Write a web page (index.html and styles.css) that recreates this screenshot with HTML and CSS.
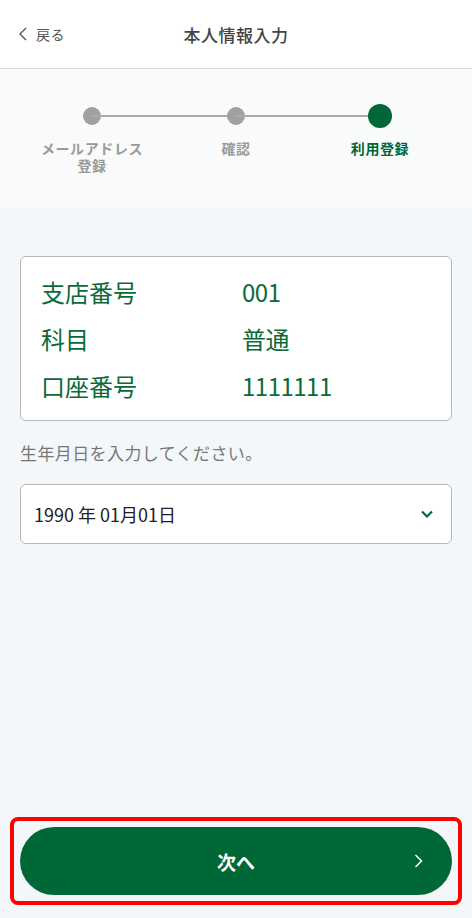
FILE: index.html
```html
<!DOCTYPE html>
<html lang="ja">
  <head>
    <meta charset="UTF-8" />
    <meta name="viewport" content="width=device-width, initial-scale=1.0" />
    <title>本人情報入力</title>
    <link rel="stylesheet" href="styles.css">
  </head>
  <body>
    <div class="page">
      <!-- header -->
      <header class="header">
        <a class="back" href="#">
          <svg class="back-icon" width="10" height="14" viewBox="0 0 10 14">
            <path d="M8 1 L2 7 L8 13" fill="none" stroke="#555" stroke-width="1.4" />
          </svg>
          <span>戻る</span>
        </a>
        <h1 class="title">本人情報入力</h1>
      </header>

      <!-- stepper -->
      <div class="stepper">
        <div class="step done">
          <div class="dot-row"><span class="dot"></span></div>
          <p>メールアドレス<br>登録</p>
        </div>
        <div class="step done">
          <div class="dot-row"><span class="dot"></span></div>
          <p>確認</p>
        </div>
        <div class="step current">
          <div class="dot-row"><span class="dot"></span></div>
          <p>利用登録</p>
        </div>
      </div>

      <main class="content">
        <div class="account-card">
          <div class="row"><span>支店番号</span><span>001</span></div>
          <div class="row"><span>科目</span><span>普通</span></div>
          <div class="row"><span>口座番号</span><span>1111111</span></div>
        </div>

        <p class="hint">生年月日を入力してください。</p>

        <div class="select">
          <span>1990 年 01月01日</span>
          <svg width="14" height="10" viewBox="0 0 14 10">
            <path d="M2 2.5 L7 7.5 L12 2.5" fill="none" stroke="#006837" stroke-width="2.2" />
          </svg>
        </div>
      </main>

      <footer class="footer">
        <div class="highlight">
          <button class="next-btn">
            <span>次へ</span>
            <svg class="next-icon" width="9" height="14" viewBox="0 0 9 14">
              <path d="M1.5 1 L7.5 7 L1.5 13" fill="none" stroke="#fff" stroke-width="1.5" />
            </svg>
          </button>
        </div>
      </footer>
    </div>
  </body>
</html>
```

FILE: styles.css
```css
body {
  margin: 0;
  padding: 0;
  font-family: "Noto Sans CJK JP", "Noto Sans", sans-serif;
  background: #f4f7fa;
}

.page {
  min-height: 100vh;
  display: flex;
  flex-direction: column;
}

/* header */
.header {
  height: 68px;
  background: #fff;
  border-bottom: 1px solid #dcdcdc;
  display: flex;
  align-items: center;
  justify-content: center;
  position: relative;
}

.back {
  position: absolute;
  left: 18px;
  top: 24px;
  display: flex;
  align-items: center;
  gap: 8px;
  color: #555;
  font-size: 14px;
  letter-spacing: 0.5px;
  text-decoration: none;
}

.title {
  margin: 0;
  font-size: 17px;
  font-weight: 500;
  letter-spacing: 0.5px;
  color: #444;
}

/* stepper */
.stepper {
  background: #f9fafa;
  display: grid;
  grid-template-columns: repeat(3, 1fr);
  padding: 35px 20px 33px;
}

.step {
  position: relative;
  text-align: center;
}

.dot-row {
  height: 24px;
  display: flex;
  align-items: center;
  justify-content: center;
}

.step + .step::before {
  content: "";
  position: absolute;
  top: 11px;
  left: -50%;
  width: 100%;
  height: 2px;
  background: #a9a9a9;
}

.dot {
  position: relative;
  width: 18px;
  height: 18px;
  border-radius: 50%;
  background: #a0a0a0;
}

.step.current .dot {
  width: 24px;
  height: 24px;
  background: #006837;
}

.step p {
  margin: 12px 0 0;
  font-size: 14px;
  line-height: 17px;
  letter-spacing: 0.6px;
  font-weight: bold;
  color: #9a9a9a;
}

.step.current p {
  color: #006837;
}

/* content */
.content {
  flex: 1;
  padding: 49px 20px 0;
}

.account-card {
  background: #fff;
  border: 1px solid #b8b8b8;
  border-radius: 6px;
  padding: 11px 20px;
}

.row {
  display: grid;
  grid-template-columns: 201px 1fr;
  font-size: 24px;
  line-height: 47px;
  color: #0a6b3a;
}

.row span:last-child {
  letter-spacing: -0.5px;
}

.hint {
  margin: 19px 0 0;
  font-size: 17px;
  line-height: 26px;
  letter-spacing: 0.4px;
  color: #777;
}

.select {
  margin-top: 18px;
  height: 58px;
  background: #fff;
  border: 1px solid #b8b8b8;
  border-radius: 6px;
  display: flex;
  align-items: center;
  justify-content: space-between;
  padding: 0 17px 0 13px;
  font-size: 18px;
  color: #222;
}

/* footer */
.footer {
  padding: 0 10px 13px;
}

.highlight {
  border: 4px solid #ff0000;
  border-radius: 8px;
  padding: 6px;
}

.next-btn {
  position: relative;
  width: 100%;
  height: 68px;
  border: none;
  border-radius: 34px;
  background: #006837;
  color: #fff;
  font-family: inherit;
  font-size: 19px;
  font-weight: bold;
  cursor: pointer;
}

.next-icon {
  position: absolute;
  right: 29px;
  top: 27px;
}
```
